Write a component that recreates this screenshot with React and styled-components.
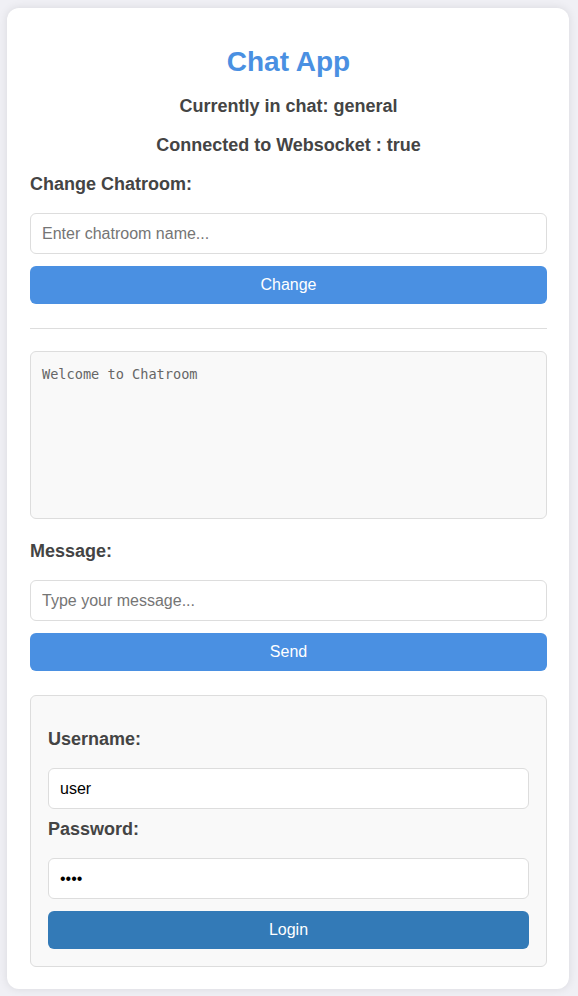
import React, { useState } from "react";
import styled, { createGlobalStyle } from "styled-components";

const GlobalStyle = createGlobalStyle`
  html, body {
    margin: 0;
    padding: 0;
    background: #f0f0f5;
    font-family: "Liberation Sans", Arial, sans-serif;
  }
  * {
    box-sizing: border-box;
  }
`;

export default function App() {
  const [room, setRoom] = useState("");
  const [message, setMessage] = useState("");
  const [username, setUsername] = useState("user");
  const [password, setPassword] = useState("pass");

  return (
    <>
      <GlobalStyle />
      <Card>
        <Title>Chat App</Title>
        <Status>Currently in chat: general</Status>
        <Status>Connected to Websocket : true</Status>

        <Label>Change Chatroom:</Label>
        <Input
          placeholder="Enter chatroom name..."
          value={room}
          onChange={(e) => setRoom(e.target.value)}
        />
        <Button>Change</Button>

        <Divider />

        <ChatLog readOnly value="Welcome to Chatroom" />

        <Label $top={22}>Message:</Label>
        <Input
          placeholder="Type your message..."
          value={message}
          onChange={(e) => setMessage(e.target.value)}
        />
        <Button>Send</Button>

        <LoginBox>
          <Label $top={18}>Username:</Label>
          <Input value={username} onChange={(e) => setUsername(e.target.value)} />
          <Label $top={10}>Password:</Label>
          <Input
            type="password"
            value={password}
            onChange={(e) => setPassword(e.target.value)}
          />
          <Button $dark>Login</Button>
        </LoginBox>
      </Card>
    </>
  );
}

const Card = styled.div`
  width: 562px;
  margin: 8px 0 7px 7px;
  padding: 0 22px 22px 23px;
  background: #ffffff;
  border-radius: 12px;
  box-shadow: 0 0 10px rgba(0, 0, 0, 0.1);
  display: flex;
  flex-direction: column;
`;

const Title = styled.h1`
  margin: 38px 0 0;
  font-size: 28px;
  line-height: 32px;
  font-weight: bold;
  text-align: center;
  color: #4a90e2;
`;

const Status = styled.h3`
  margin: 18px 0 0;
  font-size: 18px;
  line-height: 21px;
  font-weight: bold;
  text-align: center;
  color: #444444;
`;

const Label = styled.label`
  display: block;
  margin: ${(props) => props.$top ?? 18}px 0 18px;
  font-size: 18px;
  line-height: 21px;
  font-weight: bold;
  color: #444444;
`;

const Input = styled.input`
  display: block;
  width: 100%;
  height: 41px;
  padding: 10px 11px;
  font-size: 16px;
  font-family: "Liberation Sans", Arial, sans-serif;
  color: #000000;
  background: #ffffff;
  border: 1px solid #dddddd;
  border-radius: 6px;
  outline: none;
  &::placeholder {
    color: #757575;
  }
`;

const Button = styled.button`
  display: block;
  width: 100%;
  height: 38px;
  margin-top: 12px;
  border: none;
  border-radius: 6px;
  font-size: 16px;
  font-family: "Liberation Sans", Arial, sans-serif;
  color: #ffffff;
  background-color: ${(props) => (props.$dark ? "#337ab7" : "#4a90e2")};
  cursor: pointer;
  &:hover {
    opacity: 0.9;
  }
`;

const Divider = styled.hr`
  width: 100%;
  margin: 24px 0 22px;
  border: none;
  border-top: 1px solid #dddddd;
`;

const ChatLog = styled.textarea`
  display: block;
  width: 100%;
  height: 168px;
  padding: 14px 11px;
  resize: none;
  font-family: "DejaVu Sans Mono", "Liberation Mono", monospace;
  font-size: 13.6px;
  color: #666666;
  background: #f9f9f9;
  border: 1px solid #dddddd;
  border-radius: 6px;
  outline: none;
`;

const LoginBox = styled.div`
  margin-top: 24px;
  padding: 15px 17px 17px;
  background: #f9f9f9;
  border: 1px solid #dddddd;
  border-radius: 6px;
`;
